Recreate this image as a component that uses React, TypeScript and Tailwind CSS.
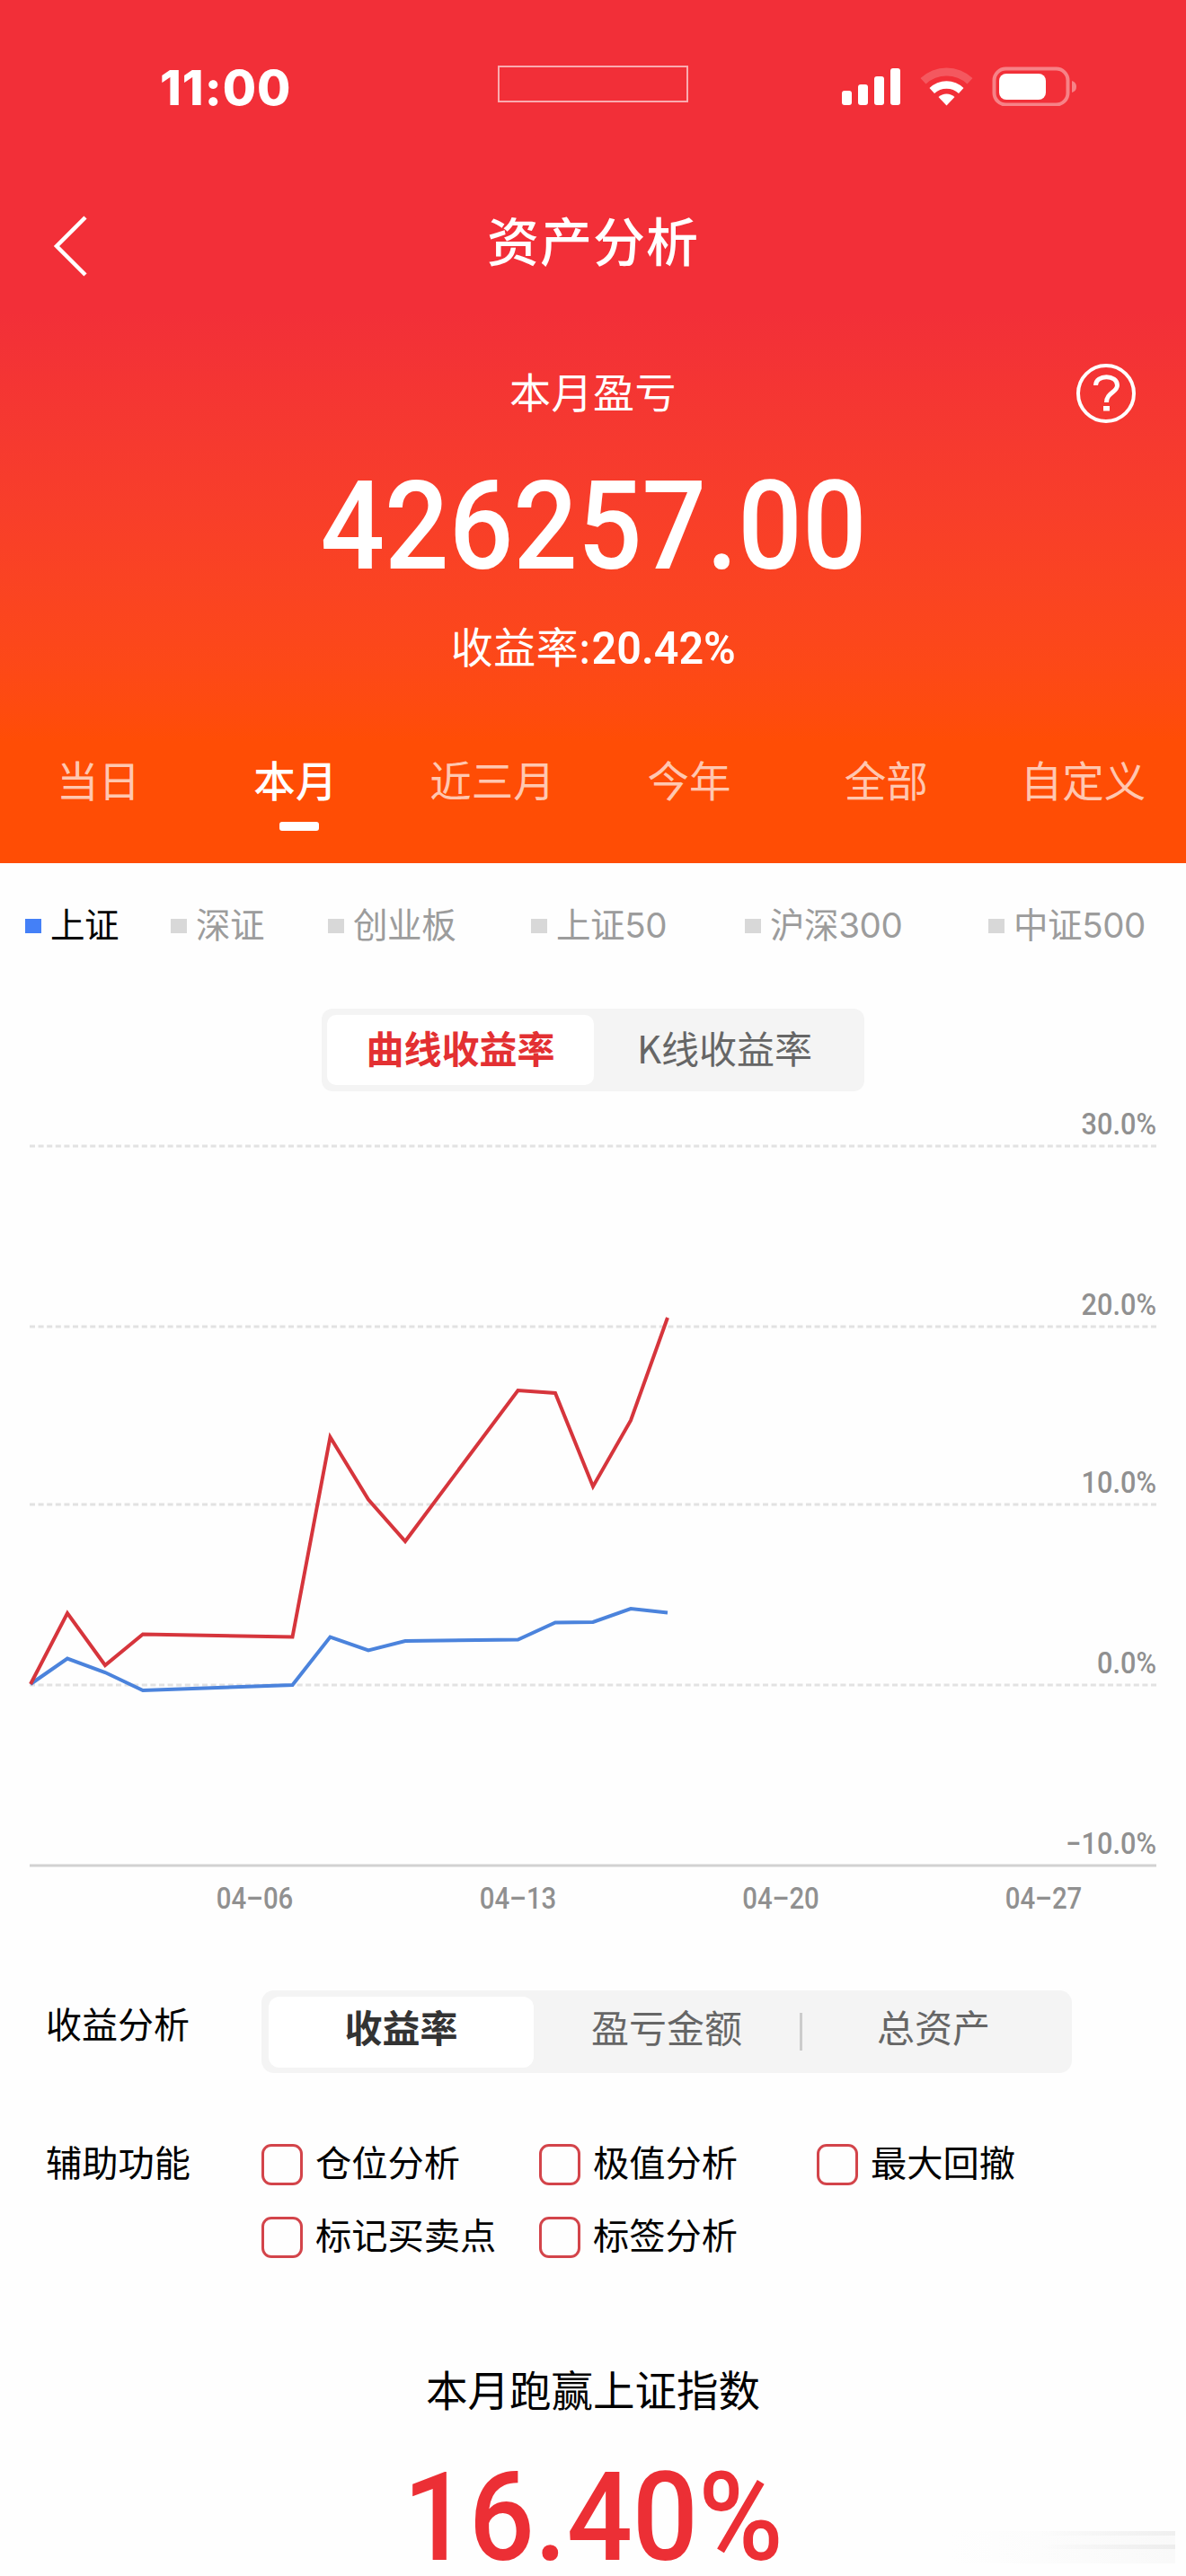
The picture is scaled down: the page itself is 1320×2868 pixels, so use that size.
import { useState } from 'react';
import clsx from 'clsx';

const periods = ['当日', '本月', '近三月', '今年', '全部', '自定义'];

const indexes = [
  { name: '上证', width: 'w-[162px]' },
  { name: '深证', width: 'w-[175px]' },
  { name: '创业板', width: 'w-[226px]' },
  { name: '上证50', width: 'w-[238px]' },
  { name: '沪深300', width: 'w-[271px]' },
  { name: '中证500', width: 'w-[200px]' },
];

const helpers = ['仓位分析', '极值分析', '最大回撤', '标记买卖点', '标签分析'];

const gridLines = [
  { label: '30.0%', y: 46 },
  { label: '20.0%', y: 247 },
  { label: '10.0%', y: 445 },
  { label: '0.0%', y: 646 },
  { label: '−10.0%', y: 847 },
];

const dates = [
  { label: '04–06', x: 283.5 },
  { label: '04–13', x: 576.5 },
  { label: '04–20', x: 869 },
  { label: '04–27', x: 1161.5 },
];

const profitLine =
  '34,645 75,566 117,624 159,589.5 325.5,592.5 367.5,370 410,439.5 451,486 576.5,318 618,321 660,425 702,351.5 743,237';
const indexLine =
  '34,645 75,616.5 117,632 159,652 325.5,646 367.5,592.5 410,607.5 451,597 576.5,595.5 618,576.5 660,576 702,561 743,565.5';

function StatusBar() {
  return (
    <div className="flex h-[190px] items-start justify-between pl-[178px] pr-[121px] pt-[73px]">
      <div className="w-[376px] font-[Inter] text-[54px] font-extrabold leading-[50px] tracking-[1px]">11:00</div>
      <div className="h-[41px] w-[212px] border-2 border-white/60" />
      <svg className="ml-[170px] h-[45px] w-[263px] shrink-0" viewBox="0 0 263 45" fill="#fff">
        <rect x="1" y="28" width="11" height="16" rx="3" />
        <rect x="19" y="21" width="11" height="23" rx="3" />
        <rect x="37" y="12" width="11" height="32" rx="3" />
        <rect x="55" y="3" width="11" height="41" rx="3" />
        <path d="M88.500 14 A42 42 0 0 1 146.500 14 L140.500 20.500 A34 34 0 0 0 94.500 20.500 Z" opacity="0.2" />
        <path d="M98.500 25 A27 27 0 0 1 136.500 25 L131 31 A20 20 0 0 0 104 31 Z" />
        <path d="M108.500 35 A13 13 0 0 1 126.500 35 L117.500 44.500 Z" />
        <rect x="170.500" y="3.500" width="82" height="40" rx="13" fill="none" stroke="#fff" strokeWidth="4" opacity="0.4" />
        <rect x="176" y="9" width="52" height="29" rx="8" />
        <path d="M257 17 Q262 18.500 262 23.500 Q262 28.500 257 30 Z" opacity="0.4" />
      </svg>
    </div>
  );
}

function Header({ period, onChange }: { period: string; onChange: (p: string) => void }) {
  return (
    <header className="h-[961px] bg-linear-to-b from-[#f22f38] from-36% to-[#ff4d05] to-86% text-white">
      <StatusBar />

      {/* Title */}
      <div className="grid h-[160px] grid-cols-[200px_1fr_200px] items-center">
        <svg className="ml-[58px] mt-[8px] h-[72px] w-[42px]" viewBox="0 0 42 72" fill="none" stroke="#fff" strokeWidth="4.500">
          <path d="M37 4 L5 36 L37 68" />
        </svg>
        <h1 className="pb-[7px] text-center text-[58px] font-medium tracking-[1px]">资产分析</h1>
      </div>

      {/* Summary */}
      <div className="grid h-[176px] grid-cols-[200px_1fr_200px] items-center">
        <span className="col-start-2 pb-[8px] text-center text-[46px] tracking-[0.5px]">本月盈亏</span>
        <svg className="ml-[77px] h-[68px] w-[68px]" viewBox="0 0 68 68" fill="none" stroke="#fff" strokeWidth="4">
          <circle cx="34" cy="34" r="31" />
          <path d="M22.500 25 C22.500 12.500 46.500 12.500 46.500 25 C46.500 33 34.500 33 34.500 44" strokeWidth="5" />
          <path d="M34.500 48 V53.500" strokeWidth="7" />
        </svg>
      </div>
      <div className="flex h-[120px] items-center justify-center pt-[1px]">
        <span className="scale-x-[0.92] font-[Roboto] text-[137px] font-medium leading-none">426257.00</span>
      </div>
      <div className="flex h-[150px] items-center justify-center pl-[3px] text-[47px]">
        <span className="shrink-0 pb-[6px] tracking-[0.5px]">收益率:</span>
        <span className="-ml-[2px] scale-x-[0.97] pt-[2px] font-[Roboto] text-[50px] font-semibold">20.42%</span>
      </div>

      {/* Periods */}
      <nav className="mt-[37px] grid grid-cols-6 pr-[5px]">
        {periods.map((p) => (
          <button
            key={p}
            onClick={() => onChange(p)}
            className={clsx(
              'flex flex-col items-center text-[46.500px] leading-[68px]',
              p === period ? 'font-medium' : 'text-white/70'
            )}
          >
            {p}
            {p === period && <i className="ml-[8px] mt-[14px] h-[10px] w-[44px] rounded-[3px] bg-white" />}
          </button>
        ))}
      </nav>
    </header>
  );
}

function Chart() {
  return (
    <svg className="block h-[950px] w-full" viewBox="0 0 1320 950">
      {gridLines.map((g, i) => (
        <g key={g.label}>
          <line
            x1="33"
            x2="1287"
            y1={g.y}
            y2={g.y}
            stroke={i === 4 ? '#d2d2d2' : '#e2e2e2'}
            strokeWidth="3"
            strokeDasharray={i === 4 ? undefined : '6 3.600'}
          />
          <text
            transform={`translate(1287 ${g.y - 13}) scale(0.93 1)`}
            textAnchor="end"
            className="fill-[#909090] font-[Roboto] text-[33px] font-medium"
          >
            {g.label}
          </text>
        </g>
      ))}
      {dates.map((d) => (
        <text
          key={d.label}
          transform={`translate(${d.x} 895) scale(0.89 1)`}
          textAnchor="middle"
          className="fill-[#909090] font-[Roboto] text-[33px] font-medium"
        >
          {d.label}
        </text>
      ))}
      <polyline points={indexLine} fill="none" stroke="#4b83dc" strokeWidth="4" />
      <polyline points={profitLine} fill="none" stroke="#d6353c" strokeWidth="4" />
    </svg>
  );
}

export default function App() {
  const [period, setPeriod] = useState('本月');
  const [checked, setChecked] = useState<string[]>([]);

  const toggle = (name: string) =>
    setChecked((prev) => (prev.includes(name) ? prev.filter((n) => n !== name) : [...prev, name]));

  return (
    <div className="relative h-[2868px] w-[1320px] overflow-hidden bg-[#fefefe] font-['Noto_Sans_CJK_SC',sans-serif] text-black">
      <Header period={period} onChange={setPeriod} />

      {/* Index legend */}
      <div className="flex h-[140px] items-center pl-[28px] font-['Inter','Noto_Sans_CJK_SC',sans-serif]">
        {indexes.map((item, i) => (
          <div key={item.name} className={clsx('flex shrink-0 items-center gap-[10px]', item.width)}>
            <i className={clsx('h-[16px] w-[18px]', i === 0 ? 'bg-[#4480f7]' : 'bg-[#d8d8d8]')} />
            <span
              className={clsx('whitespace-nowrap text-[38.500px] tracking-[-0.400px]', i > 0 && 'text-[#9c9c9c]')}
            >
              {item.name}
            </span>
          </div>
        ))}
      </div>

      {/* Curve / candle switch */}
      <div className="mx-auto mt-[22px] flex h-[92px] w-[604px] items-center rounded-[12px] bg-[#f4f4f4] px-[6px] text-center text-[42px]">
        <div className="h-[78px] w-[297px] rounded-[10px] bg-white font-bold leading-[71px] text-[#e33032]">曲线收益率</div>
        <div className="h-[78px] flex-1 pr-[4px] leading-[71px] text-[#666]">K线收益率</div>
      </div>

      <div className="mt-[15px]">
        <Chart />
      </div>

      {/* Profit analysis */}
      <div className="mt-[36px] flex h-[92px] items-center pl-[51px] text-[40px]">
        <span className="-mt-[21px] w-[240px]">收益分析</span>
        <div className="flex h-[92px] w-[902px] items-center rounded-[14px] bg-[#f4f4f4] px-[8px] text-center text-[42px] leading-[66px] text-[#666]">
          <div className="h-[79px] w-[295px] rounded-[12px] bg-white font-bold text-[#333]">收益率</div>
          <div className="h-[79px] w-[296px]">盈亏金额</div>
          <div className="h-[42px] w-[3px] bg-[#ccc]" />
          <div className="h-[79px] flex-1">总资产</div>
        </div>
      </div>

      {/* Helper toggles */}
      <div className="mt-[57px] flex pl-[51px] text-[40.250px] leading-[81px]">
        <span className="w-[240px]">辅助功能</span>
        <div className="grid grid-cols-[309px_309px_309px]">
          {helpers.map((name) => (
            <button key={name} onClick={() => toggle(name)} className="flex items-center gap-[14px] whitespace-nowrap">
              <i
                className={clsx(
                  'mt-[8px] h-[46px] w-[46px] rounded-[11px] border-[3px] border-[#d3444a]',
                  checked.includes(name) && 'bg-[#d3444a]'
                )}
              />
              {name}
            </button>
          ))}
        </div>
      </div>

      {/* Result */}
      <div className="mt-[97px] text-center">
        <div className="text-[46.500px] leading-[70px]">本月跑赢上证指数</div>
        <div className="mt-[49px] flex justify-center">
          <span className="scale-x-[0.94] font-[Roboto] text-[137px] font-medium leading-[120px] text-[#ec2f35]">16.40%</span>
        </div>
      </div>

      {/* Faded corner mark */}
      <div className="absolute bottom-[14px] right-[12px] flex h-[36px] w-[250px] flex-col gap-[10px] bg-linear-to-r from-transparent to-[#f9f9f9]">
        <i className="h-[5px] bg-linear-to-r from-transparent from-40% to-[#efefef]" />
        <i className="h-[5px] bg-linear-to-r from-transparent from-40% to-[#ededed]" />
      </div>
    </div>
  );
}
